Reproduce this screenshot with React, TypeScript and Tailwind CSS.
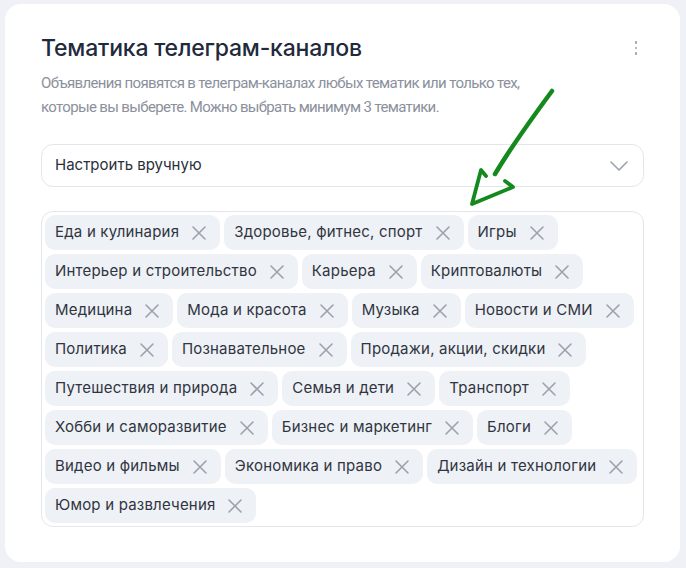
const tags = [
  "Еда и кулинария",
  "Здоровье, фитнес, спорт",
  "Игры",
  "Интерьер и строительство",
  "Карьера",
  "Криптовалюты",
  "Медицина",
  "Мода и красота",
  "Музыка",
  "Новости и СМИ",
  "Политика",
  "Познавательное",
  "Продажи, акции, скидки",
  "Путешествия и природа",
  "Семья и дети",
  "Транспорт",
  "Хобби и саморазвитие",
  "Бизнес и маркетинг",
  "Блоги",
  "Видео и фильмы",
  "Экономика и право",
  "Дизайн и технологии",
  "Юмор и развлечения",
];

function CrossIcon() {
  return (
    <svg width="16" height="16" viewBox="0 0 16 16" fill="none" className="shrink-0">
      <path d="M2 2L14 14M14 2L2 14" stroke="#9ca1ad" strokeWidth="1.6" strokeLinecap="round" />
    </svg>
  );
}

function Tag({ label }: { label: string }) {
  return (
    <div className="flex h-[35px] items-center gap-3 rounded-[10px] bg-[#eef1f6] pl-[10px] pr-[13px] text-[15px] tracking-[0.2px] text-[#30353f]">
      <span>{label}</span>
      <CrossIcon />
    </div>
  );
}

function Arrow() {
  return (
    <svg
      className="pointer-events-none absolute left-[455px] top-[80px]"
      width="105"
      height="128"
      viewBox="455 80 105 128"
      fill="none"
    >
      <path
        d="M547 87 C530 110 508 140 490 170"
        stroke="#148a1e"
        strokeWidth="4.5"
        strokeLinecap="round"
      />
      <path
        d="M481 172 L476 166 L467 200 L508 183 L500 177"
        stroke="#148a1e"
        strokeWidth="3.8"
        strokeLinecap="round"
        strokeLinejoin="round"
      />
    </svg>
  );
}

export default function App() {
  return (
    <div
      className="min-h-[568px] bg-[#eff1f6] pl-[5px] pt-[4px]"
      style={{ fontFamily: "Inter, 'Noto Sans', sans-serif" }}
    >
      <div className="relative h-[558px] w-[675px] rounded-[16px] bg-white px-[36px] pt-[28px]">
        <div className="flex items-start justify-between">
          <h2 className="text-[23px] font-medium leading-[32px] tracking-[-0.2px] text-[#1f2a3c]">
            Тематика телеграм-каналов
          </h2>
          <div className="mr-[7px] mt-[9px] flex flex-col gap-[3px]">
            <span className="h-[2.5px] w-[2.5px] rounded-full bg-[#9ca1ad]" />
            <span className="h-[2.5px] w-[2.5px] rounded-full bg-[#9ca1ad]" />
            <span className="h-[2.5px] w-[2.5px] rounded-full bg-[#9ca1ad]" />
          </div>
        </div>
        <p
          className="mt-[7px] text-[15px] leading-[24px] tracking-[-0.65px] text-[#8b909c]"
          style={{ fontFamily: "Roboto, 'Noto Sans', sans-serif" }}
        >
          Объявления появятся в телеграм-каналах любых тематик или только тех,
          <br />
          которые вы выберете. Можно выбрать минимум 3 тематики.
        </p>
        <div className="mt-[25px] flex h-[43px] items-center justify-between rounded-[12px] border border-[#e4e6ec] pl-[13px] pr-[15px] text-[15px] text-[#2a2f3a]">
          <span>Настроить вручную</span>
          <svg width="18" height="10" viewBox="0 0 18 10" fill="none">
            <path d="M1 1L9 9L17 1" stroke="#9ca1ad" strokeWidth="1.6" strokeLinecap="round" strokeLinejoin="round" />
          </svg>
        </div>
        <div className="mt-[24px] flex flex-wrap content-start gap-[4px] rounded-[12px] border border-[#e4e6ec] p-[3px]">
          {tags.map((t) => (
            <Tag key={t} label={t} />
          ))}
        </div>
        <Arrow />
      </div>
    </div>
  );
}
